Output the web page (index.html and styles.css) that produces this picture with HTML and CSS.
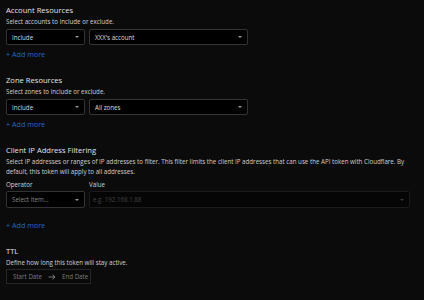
FILE: index.html
```html
<!DOCTYPE html>
<html>
<head>
<meta charset="utf-8">
<link rel="stylesheet" href="styles.css">
</head>
<body>
<div class="page">
  <section class="sec">
    <div class="title">Account Resources</div>
    <div class="desc">Select accounts to include or exclude.</div>
    <div class="row">
      <div class="select w-small"><span>Include</span><i class="caret"></i></div>
      <div class="select w-mid"><span>XXX's account</span><i class="caret"></i></div>
    </div>
    <div class="add">+ Add more</div>
  </section>

  <section class="sec">
    <div class="title">Zone Resources</div>
    <div class="desc">Select zones to include or exclude.</div>
    <div class="row">
      <div class="select w-small"><span>Include</span><i class="caret"></i></div>
      <div class="select w-mid"><span>All zones</span><i class="caret"></i></div>
    </div>
    <div class="add">+ Add more</div>
  </section>

  <section class="sec">
    <div class="title">Client IP Address Filtering</div>
    <div class="desc">Select IP addresses or ranges of IP addresses to filter. This filter limits the client IP addresses that can use the API token with Cloudflare. By default, this token will apply to all addresses.</div>
    <div class="labels">
      <div class="label w-small">Operator</div>
      <div class="label">Value</div>
    </div>
    <div class="row row-ip">
      <div class="select w-small tall"><span class="ph">Select item...</span><i class="caret"></i></div>
      <div class="select w-wide tall disabled"><span class="ph2">e.g. 192.168.1.88</span><i class="caret dim"></i></div>
    </div>
    <div class="add add-ip">+ Add more</div>
  </section>

  <section class="sec">
    <div class="title">TTL</div>
    <div class="desc">Define how long this token will stay active.</div>
    <div class="dates">
      <span>Start Date</span>
      <svg class="arrow" width="8" height="6" viewBox="0 0 8 6"><path d="M0.5 3H7M4.5 0.7L7 3L4.5 5.3" fill="none" stroke="#8a8a8a" stroke-width="0.9"/></svg>
      <span>End Date</span>
    </div>
  </section>
</div>
</body>
</html>
```

FILE: styles.css
```css
html, body {
  margin: 0;
  padding: 0;
  background: #0b0b0b;
}
body {
  font-family: "Open Sans", "Noto Sans", sans-serif;
  color: #d6d6d6;
  width: 424px;
  height: 300px;
  overflow: hidden;
}
.page {
  padding: 4px 6px 0 6px;
}
.sec + .sec {
  margin-top: 15px;
}
.title {
  font-size: 7.6px;
  line-height: 12px;
  color: #e2e2e2;
}
.desc {
  margin-top: 1px;
  font-size: 6.2px;
  line-height: 10px;
  color: #d0d0d0;
  width: 405px;
}
.row {
  display: flex;
  gap: 4px;
  margin-top: 2px;
}
.select {
  box-sizing: border-box;
  height: 16px;
  background: #000;
  border: 1px solid #333;
  border-radius: 2px;
  display: flex;
  align-items: center;
  justify-content: space-between;
  padding: 0 5px 0 5px;
  font-size: 6.2px;
  color: #dcdcdc;
}
.select.tall {
  height: 17px;
}
.w-small { width: 79px; }
.w-mid { width: 159px; }
.w-wide { width: 321px; }
.caret {
  width: 0;
  height: 0;
  border-left: 2px solid transparent;
  border-right: 2px solid transparent;
  border-top: 2.5px solid #9a9a9a;
}
.caret.dim {
  border-top-color: #3a3a3a;
}
.ph {
  color: #8a8a8a;
}
.ph2 {
  color: #444;
}
.select.disabled {
  background: #050505;
  border-color: #1b1b1b;
  padding-left: 3px;
}
.add {
  margin-top: 4px;
  font-size: 7.2px;
  line-height: 10px;
  color: #2167c8;
}
.add-ip {
  margin-top: 12px;
}
.labels {
  display: flex;
  gap: 4px;
  margin-top: 3px;
}
.label {
  font-size: 6.2px;
  line-height: 10px;
  color: #d0d0d0;
}
.row-ip {
  margin-top: 1px;
}
.dates {
  box-sizing: border-box;
  margin-top: 1px;
  width: 85px;
  height: 15px;
  border: 1px solid #262626;
  background: #090909;
  display: flex;
  align-items: center;
  gap: 5px;
  padding-left: 6px;
  font-size: 6.2px;
  color: #7c7c7c;
}
.arrow {
  display: block;
  margin: 0 1px;
}
```
